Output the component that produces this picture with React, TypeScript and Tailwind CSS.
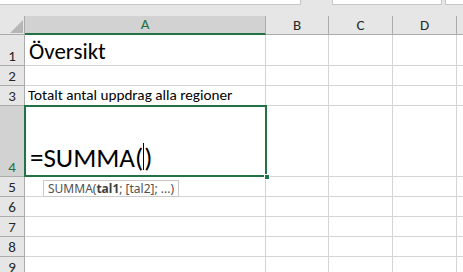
const cols = [
  { name: "A", w: "w-[241px]" },
  { name: "B", w: "w-[63px]" },
  { name: "C", w: "w-[64px]" },
  { name: "D", w: "w-[64px]" },
];

const rowHeights: Record<number, string> = {
  1: "h-[31px]",
  2: "h-[20px]",
  3: "h-[20px]",
  4: "h-[71px]",
  5: "h-[20px]",
  6: "h-[20px]",
  7: "h-[20px]",
  8: "h-[20px]",
  9: "h-[20px]",
};

function Cell({ row, col }: { row: number; col: number }) {
  const c = cols[col];
  if (col === 0 && row === 1) {
    return (
      <div className={`${c.w} h-full border-r border-b border-[#d4d4d4] flex items-end pl-[4px] pb-[2px] text-[23px] leading-none text-black`}>
        Översikt
      </div>
    );
  }
  if (col === 0 && row === 3) {
    return (
      <div className={`${c.w} h-full border-r border-b border-[#d4d4d4] flex items-end pl-[3px] pb-[2px] text-[15.2px] leading-none text-black`}>
        Totalt antal uppdrag alla regioner
      </div>
    );
  }
  if (col === 0 && row === 4) {
    return (
      <div className={`${c.w} h-full relative`}>
        <div className="absolute -left-[1px] -top-[1px] w-[243px] h-[72px] border-2 border-[#217346] flex items-end pl-[4px] pb-[4px]">
          <span className="text-[27px] leading-none text-black">=SUMMA(</span>
          <span className="w-[1px] h-[27px] bg-black mb-[1px]" />
          <span className="text-[27px] leading-none text-black">)</span>
        </div>
        <div className="absolute right-[-4px] bottom-[-3px] w-[6px] h-[6px] bg-[#217346] border border-white" />
      </div>
    );
  }
  return <div className={`${c.w} h-full border-r border-b border-[#d4d4d4]`} />;
}

export default function App() {
  const rows = [1, 2, 3, 4, 5, 6, 7, 8, 9];
  return (
    <div
      className="w-[463px] h-[272px] overflow-hidden bg-white relative"
      style={{ fontFamily: "Carlito, Lato, 'Liberation Sans', sans-serif" }}
    >
      <div className="h-[16px] bg-[#e6e6e6] flex items-start">
        <div className="w-[301px] h-[5px] bg-white border-b border-r border-[#c6c6c6]" />
        <div className="ml-[31px] w-[110px] h-[5px] bg-white border-b border-l border-r border-[#c6c6c6]" />
        <div className="ml-[3px] flex-1 h-[5px] bg-white border-b border-l border-[#c6c6c6]" />
      </div>
      <div className="h-[19px] flex bg-[#e6e6e6]">
        <div className="w-[25px] h-full border-r border-b border-[#ababab] relative">
          <svg className="absolute left-[10px] top-[4px]" width="13" height="13" viewBox="0 0 13 13">
            <polygon points="13,0 13,13 0,13" fill="#b6b6b6" />
          </svg>
        </div>
        {cols.map((c, i) => (
          <div
            key={c.name}
            className={`${c.w} h-full flex items-center justify-center text-[15px] ${
              i === 0
                ? "bg-[#d2d2d2] text-[#217346] border-b-2 border-[#217346] border-r border-r-[#ababab]"
                : "text-[#262626] border-r border-b border-[#ababab]"
            }`}
          >
            {c.name}
          </div>
        ))}
        <div className="flex-1 h-full border-b border-[#ababab]" />
      </div>
      {rows.map((r) => (
        <div key={r} className={`${rowHeights[r]} flex`}>
          <div
            className={`w-[25px] h-full flex items-end justify-center pb-[1px] text-[15px] leading-none border-r border-b border-[#ababab] ${
              r === 4 ? "bg-[#d2d2d2] text-[#217346]" : "bg-[#e6e6e6] text-[#262626]"
            }`}
          >
            {r}
          </div>
          {cols.map((_, i) => (
            <Cell key={i} row={r} col={i} />
          ))}
          <div className="flex-1 h-full border-b border-[#d4d4d4]" />
        </div>
      ))}
      <div
        className="absolute left-[43px] top-[180px] h-[17px] px-[4px] bg-white border border-[#c8c8c8] flex items-center text-[12px] text-[#505050] leading-none"
        style={{ fontFamily: "'Noto Sans', 'Open Sans', sans-serif" }}
      >
        SUMMA(<b className="font-bold text-[#404040]">tal1</b>; [tal2]; ...)
      </div>
    </div>
  );
}
